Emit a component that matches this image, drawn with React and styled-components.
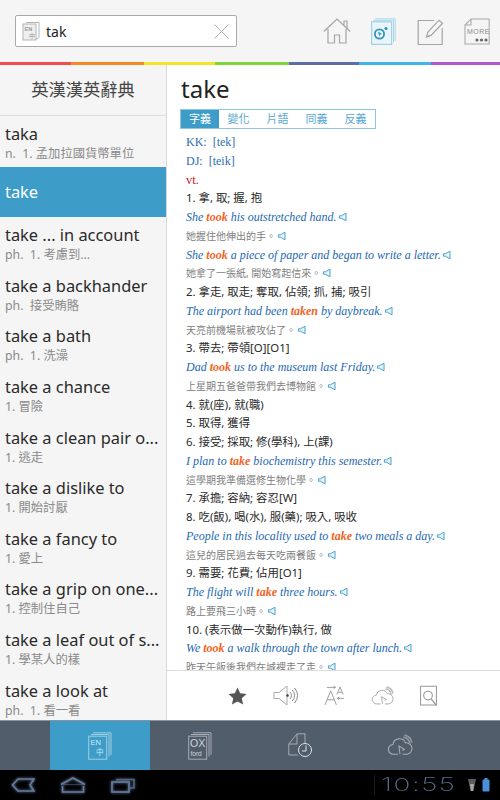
import React from "react";
import styled, { createGlobalStyle } from "styled-components";

const GlobalStyle = createGlobalStyle`
  html, body {
    margin: 0;
    padding: 0;
    background: #000;
  }
`;

const sans = `"Noto Sans", "Open Sans", "Noto Sans CJK TC", sans-serif`;
const serif = `"Liberation Serif", "Noto Sans CJK TC", serif`;

const Screen = styled.div`
  width: 500px;
  height: 800px;
  display: flex;
  flex-direction: column;
  overflow: hidden;
  font-family: ${sans};
  background: #fff;
`;

const Header = styled.header`
  height: 62px;
  flex: none;
  box-sizing: border-box;
  background: #f5f5f5;
  display: flex;
  align-items: center;
  padding: 0 10px 0 15px;
`;

const SearchBox = styled.div`
  width: 222px;
  height: 32px;
  box-sizing: border-box;
  background: #fff;
  border: 1px solid #a9a9a9;
  border-radius: 2px;
  display: flex;
  align-items: center;
  padding: 0 7px 0 6px;
  gap: 6px;
`;

const SearchText = styled.span`
  flex: 1;
  font-size: 14px;
  color: #222;
`;

const HeaderIcons = styled.nav`
  margin-left: auto;
  display: flex;
  align-items: center;
  gap: 20.5px;
`;

const Rainbow = styled.div`
  height: 3px;
  flex: none;
  display: flex;
`;

const Stripe = styled.div`
  width: ${(p) => p.$w}px;
  background: ${(p) => p.$c};
`;

const Main = styled.div`
  height: 655px;
  flex: none;
  display: flex;
`;

const Sidebar = styled.aside`
  width: 167px;
  flex: none;
  box-sizing: border-box;
  background: #f5f5f5;
  border-right: 1px solid #d9d9d9;
  overflow: hidden;
`;

const SidebarTitle = styled.div`
  height: 51px;
  box-sizing: border-box;
  padding-bottom: 3px;
  border-bottom: 1px solid #dedede;
  display: flex;
  align-items: center;
  justify-content: center;
  font-size: 17.3px;
  color: #444;
`;

const WordRow = styled.div`
  height: 50.6px;
  box-sizing: border-box;
  padding: ${(p) => (p.$active ? "0 0 0 5px" : "6px 0 0 5px")};
  background: ${(p) => (p.$active ? "#3d9dc8" : "transparent")};
  display: flex;
  flex-direction: column;
  justify-content: ${(p) => (p.$active ? "center" : "flex-start")};
`;

const WordTitle = styled.div`
  font-size: 16.4px;
  line-height: 24px;
  color: ${(p) => (p.$active ? "#fff" : "#2a2a2a")};
  white-space: nowrap;
`;

const WordSub = styled.div`
  font-size: 12.3px;
  line-height: 16px;
  color: #8a8a8a;
  white-space: pre;
`;

const Detail = styled.section`
  flex: 1;
  min-width: 0;
  display: flex;
  flex-direction: column;
  background: #fff;
`;

const Content = styled.div`
  flex: 1;
  min-height: 0;
  overflow: hidden;
  padding: 4px 0 0 13px;
`;

const Headword = styled.h1`
  margin: 0 0 1px 1px;
  font-size: 24px;
  line-height: 39px;
  font-weight: 400;
  color: #222;
`;

const Tabs = styled.div`
  display: flex;
  width: 196px;
  height: 20px;
  box-sizing: border-box;
  border: 1px solid #8cc6e0;
  margin-bottom: 4px;
`;

const Tab = styled.div`
  width: ${(p) => (p.$active ? 38 : 39)}px;
  font-size: 11px;
  line-height: 18px;
  text-align: center;
  color: ${(p) => (p.$active ? "#fff" : "#5aa8cf")};
  background: ${(p) => (p.$active ? "#3d9dc8" : "transparent")};
`;

const Line = styled.div`
  height: 18.75px;
  line-height: 18.75px;
  white-space: pre;
  padding-left: 6px;
`;

const Phonetic = styled(Line)`
  font-family: ${serif};
  font-size: 12px;
  color: #2f6db0;
`;

const PartOfSpeech = styled(Line)`
  font-family: ${serif};
  font-size: 12.5px;
  color: #d01818;
`;

const Sense = styled(Line)`
  font-size: 11.4px;
  color: #2a2a2a;
`;

const Example = styled(Line)`
  font-family: ${serif};
  font-style: italic;
  font-size: 12px;
  color: #2368b0;
`;

const Highlight = styled.b`
  font-weight: 700;
  color: #f0641e;
`;

const Translation = styled(Line)`
  font-size: 10px;
  color: #808080;
`;

const DetailTools = styled.div`
  height: 50px;
  flex: none;
  box-sizing: border-box;
  border-top: 1px solid #dcdcdc;
  background: #fff;
  display: flex;
  align-items: center;
  padding-left: 61px;
  gap: 26px;
`;

const TabBar = styled.div`
  height: 50px;
  flex: none;
  background: #525d6c;
  border-top: 1px solid #8a929c;
  box-sizing: border-box;
  display: flex;
  padding-left: 50px;
`;

const TabItem = styled.div`
  width: 100px;
  display: flex;
  align-items: center;
  justify-content: center;
  background: ${(p) => (p.$active ? "#3d9dc8" : "transparent")};
`;

const SystemBar = styled.div`
  height: 30px;
  flex: none;
  background: #000;
  display: flex;
  align-items: center;
  padding: 0 10px 0 11px;
`;

const SystemNav = styled.div`
  display: flex;
  align-items: center;
  gap: 25px;
  filter: drop-shadow(0 0 1.5px #6f8cbc);
`;

const SystemStatus = styled.div`
  margin-left: auto;
  display: flex;
  align-items: center;
  gap: 5px;
`;

const StatusDivider = styled.div`
  width: 1px;
  height: 20px;
  margin-right: 28px;
  background: #1c1c1c;
`;

const Clock = styled.div`
  font-family: "Inter", sans-serif;
  font-weight: 200;
  font-size: 18px;
  line-height: 20px;
  color: #566d8e;
  letter-spacing: 1px;
  transform: scaleX(1.55);
  transform-origin: right center;
  margin-right: 6px;
`;

const SpeakerSvg = styled.svg`
  margin-left: 1px;
  vertical-align: -1px;
`;

const SpeakerIcon = () => (
  <SpeakerSvg width="10" height="10" viewBox="0 0 10 10">
    <path d="M8 1.2v7.6L3.4 6.2H1.4V3.8h2z" fill="#e8f4fa" stroke="#4aa3cc" strokeWidth="1" />
  </SpeakerSvg>
);

// search field book with EN / 中 label
const SearchBook = () => (
  <svg width="18" height="20" viewBox="0 0 18 20" fill="none">
    <path d="M4 1.5h13v15l-3 2" stroke="#b5b5b5" />
    <rect x="1" y="3" width="13" height="16" fill="#efefef" stroke="#b5b5b5" />
    <text x="2.5" y="9.5" fontSize="5.5" fontWeight="700" fontFamily="Liberation Sans" fill="#999">EN</text>
    <text x="7" y="16.5" fontSize="6" fontFamily="Noto Sans CJK TC" fill="#999">中</text>
  </svg>
);

const ClearIcon = () => (
  <svg width="15" height="15" viewBox="0 0 15 15" stroke="#b0b0b0" strokeWidth="1">
    <path d="M0.5 0.5l14 14M14.5 0.5l-14 14" />
  </svg>
);

const HomeIcon = () => (
  <svg width="28" height="26" viewBox="0 0 28 26" fill="none" stroke="#a5a5a5" strokeWidth="1.2">
    <path d="M0.8 13.5L14 1l13.2 12.5M21 7V3h3v7M5 11v14h6.5v-8h5v8H23V11" />
  </svg>
);

const ReviewIcon = () => (
  <svg width="25" height="27" viewBox="0 0 25 27" fill="none">
    <path d="M4 .8h20.2v22" stroke="#a9d6ea" />
    <path d="M2.5 2.3h20v22" stroke="#a9d6ea" />
    <rect x=".7" y="3.8" width="20" height="22.5" fill="#e9f5fa" stroke="#8ecae4" />
    <circle cx="8.5" cy="16" r="4.6" stroke="#2f93c0" strokeWidth="1.8" />
    <path d="M7 13.5l4 2.5-2.2.8-.5 2z" fill="#2f93c0" />
    <circle cx="15" cy="10.5" r="1.6" fill="#2f93c0" />
  </svg>
);

const EditIcon = () => (
  <svg width="27" height="27" viewBox="0 0 27 27" fill="none" stroke="#a5a5a5" strokeWidth="1.2">
    <path d="M17 2.5H1.2v24h24V10" />
    <path d="M9.5 19l1.4-5L22 2.2l3.6 3L14.5 17z" fill="#f5f5f5" />
    <path d="M9.5 19l5-2" />
  </svg>
);

const MoreIcon = () => (
  <svg width="26" height="27" viewBox="0 0 26 27" fill="none">
    <path d="M7 1h18.2v25H1V7z" stroke="#aaa" strokeWidth="1.1" />
    <path d="M7 1v6H1" stroke="#aaa" strokeWidth="1.1" />
    <text x="3" y="16" fontSize="7" letterSpacing=".5" fontFamily="Liberation Sans" fill="#8d8d8d">MORE</text>
    <circle cx="13" cy="22" r="1.6" fill="#666" />
    <circle cx="17.5" cy="22" r="1.6" fill="#666" />
    <circle cx="22" cy="22" r="1.6" fill="#666" />
  </svg>
);

const StarIcon = () => (
  <svg width="19" height="18" viewBox="0 0 20 19">
    <path d="M10 .5l2.8 6.2 6.7.7-5 4.5 1.4 6.6L10 15.2l-5.9 3.3 1.4-6.6-5-4.5 6.7-.7z" fill="#555" />
  </svg>
);

const VolumeIcon = () => (
  <svg width="25" height="21" viewBox="0 0 25 21" fill="none" stroke="#aaa" strokeWidth="1">
    <path d="M1 7.5h5L14 1v19L6 13.5H1z" />
    <circle cx="14.5" cy="10.5" r="1.3" fill="#444" stroke="none" />
    <path d="M17 7a5 5 0 010 7M19.3 5a8 8 0 010 11M21.6 3a11 11 0 010 15" stroke="#888" />
  </svg>
);

const FontSizeIcon = () => (
  <svg width="21" height="21" viewBox="0 0 22 22" fill="none" stroke="#999" strokeWidth="1">
    <path d="M1 21L7 6l6 15M3.5 15.5h7" />
    <path d="M13.5 10l3.3-8 3.3 8M15 7.5h3.6" />
    <path d="M3 2.5h9M10 1l2 1.5L10 4M14 14h7M16 12.5L14 14l2 1.5" />
  </svg>
);

const CloudIcon = ({ color = "#aaa", arc = "#bbb", size = 23 }) => (
  <svg width={size} height={size * 0.85} viewBox="0 0 24 20" fill="none" stroke={color} strokeWidth="1">
    <path d="M6 18.5a4.5 4.5 0 01-.5-9A6 6 0 0117 8a5.3 5.3 0 011.5 10.5h-4M10 18.5H6" />
    <path d="M12 18.5l-1-7.5 5 3-2 .8" />
    <path d="M15 3a6 6 0 016 6M16 .8a8.5 8.5 0 017 7" stroke={arc} strokeWidth="1.6" />
  </svg>
);

const LookupIcon = () => (
  <svg width="17" height="22" viewBox="0 0 18 22" fill="none" stroke="#999" strokeWidth="1.1">
    <path d="M.6.6h16.8v20H.6z" />
    <circle cx="8.5" cy="10.5" r="4.6" fill="#fff" />
    <path d="M11.8 14l5.6 7" strokeWidth="1.4" />
  </svg>
);

const TabEnIcon = () => (
  <svg width="24" height="28" viewBox="0 0 24 28" fill="none" stroke="#9fcde3" strokeWidth="1">
    <path d="M5 .8h18v22" />
    <path d="M3 2.5h18v22" />
    <rect x=".7" y="4.2" width="18" height="23" fill="#3d9dc8" />
    <text x="2.5" y="13" fontSize="7.5" fontFamily="Liberation Sans" fill="#cfe8f4" stroke="none">EN</text>
    <text x="8" y="23" fontSize="7.5" fontFamily="Noto Sans CJK TC" fill="#cfe8f4" stroke="none">中</text>
  </svg>
);

const TabOxIcon = () => (
  <svg width="24" height="28" viewBox="0 0 24 28" fill="none" stroke="#a4abb4" strokeWidth="1">
    <path d="M5 .8h18v22" />
    <path d="M3 2.5h18v22" />
    <rect x=".7" y="4.2" width="18" height="23" fill="#525d6c" />
    <text x="2" y="15" fontSize="10.5" fontFamily="Liberation Sans" fill="#d0d4d9" stroke="none">OX</text>
    <text x="2.5" y="23.5" fontSize="6.5" fontFamily="Liberation Sans" fill="#d0d4d9" stroke="none">ford</text>
  </svg>
);

const TabHistoryIcon = () => (
  <svg width="25" height="25" viewBox="0 0 25 25" fill="none" stroke="#a4abb4" strokeWidth="1">
    <path d="M.8 11L9 .8h8v12M.8 11v11h9M.8 11H9V.8" />
    <circle cx="17" cy="17" r="6.5" stroke="#dfe2e6" fill="#525d6c" />
    <path d="M18 12.5V18h-4" stroke="#dfe2e6" />
  </svg>
);

const BackKey = () => (
  <svg width="24" height="14" viewBox="0 0 24 14" fill="none" stroke="#6a7c9b" strokeWidth="1.6">
    <path d="M7 1h16l-4 6 4 6H7L1.5 7z" />
  </svg>
);

const HomeKey = () => (
  <svg width="26" height="16" viewBox="0 0 26 16" fill="none" stroke="#6a7c9b" strokeWidth="1.6">
    <path d="M1 7.5L13 1l12 6.5M2.5 9v6h21V9" />
    <path d="M1 7.5h24" strokeWidth="1" opacity=".4" />
  </svg>
);

const RecentKey = () => (
  <svg width="24" height="15" viewBox="0 0 24 15" fill="none" stroke="#6a7c9b" strokeWidth="1.6">
    <rect x="1" y="4" width="17" height="10" />
    <path d="M5 1.5h18V10h-4" opacity=".7" />
  </svg>
);

const StatusIcons = () => (
  <svg width="22" height="14" viewBox="0 0 22 14">
    <path d="M0 1h8L5.5 13h-3z" fill="#5c5c5c" />
    <path d="M2 6h4l-1 7H3z" fill="#a8a8a8" />
    <rect x="14.5" y="1.5" width="7" height="12" rx="1" fill="#4a90d8" />
    <rect x="16.5" y="0" width="3" height="2" fill="#4a90d8" />
  </svg>
);

const stripes = [
  [71, "#f04e4e"],
  [73, "#f58a24"],
  [71, "#f2e526"],
  [74, "#7ed63a"],
  [70, "#5b6ea6"],
  [72, "#3fb4ec"],
  [69, "#b455d0"],
];

const words = [
  ["taka", "n.  1. 孟加拉國貨幣單位"],
  ["take", null],
  ["take ... in account", "ph.  1. 考慮到..."],
  ["take a backhander", "ph.  接受賄賂"],
  ["take a bath", "ph.  1. 洗澡"],
  ["take a chance", "1. 冒險"],
  ["take a clean pair o...", "1. 逃走"],
  ["take a dislike to", "1. 開始討厭"],
  ["take a fancy to", "1. 愛上"],
  ["take a grip on one...", "1. 控制住自己"],
  ["take a leaf out of s...", "1. 學某人的樣"],
  ["take a look at", "ph.  1. 看一看"],
];

const entry = [
  ["s", "1. 拿, 取; 握, 抱"],
  ["e", "She ", "took", " his outstretched hand."],
  ["t", "她握住他伸出的手。"],
  ["e", "She ", "took", " a piece of paper and began to write a letter."],
  ["t", "她拿了一張紙, 開始寫起信來。"],
  ["s", "2. 拿走, 取走; 奪取, 佔領; 抓, 捕; 吸引"],
  ["e", "The airport had been ", "taken", " by daybreak."],
  ["t", "天亮前機場就被攻佔了。"],
  ["s", "3. 帶去; 帶領[O][O1]"],
  ["e", "Dad ", "took", " us to the museum last Friday."],
  ["t", "上星期五爸爸帶我們去博物館。"],
  ["s", "4. 就(座), 就(職)"],
  ["s", "5. 取得, 獲得"],
  ["s", "6. 接受; 採取; 修(學科), 上(課)"],
  ["e", "I plan to ", "take", " biochemistry this semester."],
  ["t", "這學期我準備選修生物化學。"],
  ["s", "7. 承擔; 容納; 容忍[W]"],
  ["s", "8. 吃(飯), 喝(水), 服(藥); 吸入, 吸收"],
  ["e", "People in this locality used to ", "take", " two meals a day."],
  ["t", "這兒的居民過去每天吃兩餐飯。"],
  ["s", "9. 需要; 花費; 佔用[O1]"],
  ["e", "The flight will ", "take", " three hours."],
  ["t", "路上要飛三小時。"],
  ["s", "10. (表示做一次動作)執行, 做"],
  ["e", "We ", "took", " a walk through the town after lunch."],
  ["t", "昨天午飯後我們在城裡走了走。"],
];

const EntryLine = ({ line }) => {
  if (line[0] === "s") return <Sense>{line[1]}</Sense>;
  if (line[0] === "t")
    return (
      <Translation>
        {line[1]}
        <SpeakerIcon />
      </Translation>
    );
  return (
    <Example>
      {line[1]}
      <Highlight>{line[2]}</Highlight>
      {line[3]}
      <SpeakerIcon />
    </Example>
  );
};

export default function App() {
  return (
    <Screen>
      <GlobalStyle />
      <Header>
        <SearchBox>
          <SearchBook />
          <SearchText>tak</SearchText>
          <ClearIcon />
        </SearchBox>
        <HeaderIcons>
          <HomeIcon />
          <ReviewIcon />
          <EditIcon />
          <MoreIcon />
        </HeaderIcons>
      </Header>
      <Rainbow>
        {stripes.map(([w, c]) => (
          <Stripe key={c} $w={w} $c={c} />
        ))}
      </Rainbow>
      <Main>
        <Sidebar>
          <SidebarTitle>英漢漢英辭典</SidebarTitle>
          {words.map(([word, sub]) => (
            <WordRow key={word} $active={!sub}>
              <WordTitle $active={!sub}>{word}</WordTitle>
              {sub && <WordSub>{sub}</WordSub>}
            </WordRow>
          ))}
        </Sidebar>
        <Detail>
          <Content>
            <Headword>take</Headword>
            <Tabs>
              <Tab $active>字義</Tab>
              <Tab>變化</Tab>
              <Tab>片語</Tab>
              <Tab>同義</Tab>
              <Tab>反義</Tab>
            </Tabs>
            <Phonetic>KK:  [tek]</Phonetic>
            <Phonetic>DJ:  [teik]</Phonetic>
            <PartOfSpeech>vt.</PartOfSpeech>
            {entry.map((line, i) => (
              <EntryLine key={i} line={line} />
            ))}
          </Content>
          <DetailTools>
            <StarIcon />
            <VolumeIcon />
            <FontSizeIcon />
            <CloudIcon />
            <LookupIcon />
          </DetailTools>
        </Detail>
      </Main>
      <TabBar>
        <TabItem $active>
          <TabEnIcon />
        </TabItem>
        <TabItem>
          <TabOxIcon />
        </TabItem>
        <TabItem>
          <TabHistoryIcon />
        </TabItem>
        <TabItem>
          <CloudIcon color="#a4abb4" arc="#8d949e" size={26} />
        </TabItem>
      </TabBar>
      <SystemBar>
        <SystemNav>
          <BackKey />
          <HomeKey />
          <RecentKey />
        </SystemNav>
        <SystemStatus>
          <StatusDivider />
          <Clock>10:55</Clock>
          <StatusIcons />
        </SystemStatus>
      </SystemBar>
    </Screen>
  );
}
